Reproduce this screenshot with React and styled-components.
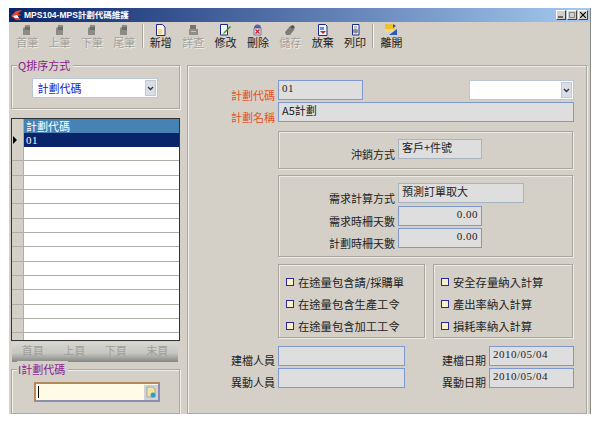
import React from "react";
import styled, { createGlobalStyle } from "styled-components";

const GlobalStyle = createGlobalStyle`
  html, body {
    margin: 0;
    padding: 0;
    background: #fff;
  }
  body {
    font-family: "Noto Sans CJK TC", "Liberation Sans", sans-serif;
    font-size: 11px;
    color: #222;
  }
`;

const Win = styled.div`
  box-sizing: border-box;
  width: 582px;
  height: 406px;
  margin: 8px 0 0 9px;
  background: #d4d0c8;
  border-right: 1px solid #8a8a86;
  overflow: hidden;
`;

const TitleBar = styled.div`
  display: flex;
  align-items: center;
  height: 14px;
  padding: 0 2px 0 2px;
  background: linear-gradient(90deg, #0a246a, #a6caf0);
`;

const AppTitle = styled.span`
  margin-left: 2px;
  flex: 1;
  color: #fff;
  font-size: 8.5px;
  font-weight: 700;
  line-height: 14px;
  white-space: nowrap;
  font-family: "Liberation Sans", "Noto Sans CJK TC", sans-serif;
`;

const WinButton = styled.span`
  display: flex;
  align-items: center;
  justify-content: center;
  box-sizing: border-box;
  width: 10px;
  height: 10px;
  margin-left: 1px;
  background: #d4d0c8;
  border: 1px solid;
  border-color: #fff #404040 #404040 #fff;
`;

const Toolbar = styled.div`
  display: flex;
  height: 29px;
  padding-left: 2px;
`;

const ToolButton = styled.div`
  display: flex;
  flex-direction: column;
  align-items: center;
  width: 32.4px;
  color: ${(p) => (p.$off ? "#a3a19b" : "#222")};
  font-size: 11px;
  line-height: 13px;
  white-space: nowrap;
  text-shadow: ${(p) => (p.$off ? "1px 1px 0 #eeece8" : "none")};
  svg {
    display: block;
    margin-top: 2px;
  }
`;

const ToolSep = styled.div`
  width: 0;
  height: 24px;
  margin: 2px 1px 0 1px;
  border-left: 1px solid #a9a69e;
  border-right: 1px solid #f4f3ef;
`;

const Body = styled.div`
  display: flex;
  gap: 7px;
  padding: 14px 0 0 2px;
`;

const Side = styled.div`
  display: flex;
  flex-direction: column;
  width: 169px;
`;

const Group = styled.div`
  position: relative;
  box-sizing: border-box;
  height: ${(p) => p.$h}px;
  margin-top: ${(p) => p.$mt || 0}px;
  border: 1px solid #aaa89f;
  box-shadow: inset 1px 1px 0 #f1efea, 1px 1px 0 #f1efea;
  display: flex;
  justify-content: center;
  padding-top: ${(p) => p.$top}px;
  padding-left: ${(p) => p.$shift || 0}px;
  padding-right: ${(p) => p.$pullback || 0}px;
`;

const Legend = styled.span`
  position: absolute;
  left: 5px;
  top: -9px;
  padding: 0 3px 0 1px;
  background: #d4d0c8;
  color: #8b1a8b;
  font-size: 11px;
  line-height: 16px;
`;

const SortSelect = styled.div`
  box-sizing: border-box;
  display: flex;
  align-items: center;
  justify-content: space-between;
  width: 126px;
  height: 20px;
  padding: 0 1px 0 5px;
  background: #fff;
  border: 1px solid #b9c7d6;
  color: #1a1acd;
  font-size: 11px;
`;

const Arrow = styled.span`
  display: flex;
  align-items: center;
  justify-content: center;
  width: 11px;
  height: 16px;
  background: #d8dde6;
  border: 1px solid #c3c9d3;
  box-sizing: border-box;
`;

const Table = styled.div`
  box-sizing: border-box;
  height: 223px;
  margin-top: 9px;
  border: 1px solid #333;
  background: #fff;
  overflow: hidden;
`;

const Row = styled.div`
  display: flex;
  box-sizing: border-box;
  height: ${(p) => (p.$tall ? 14 : 14.33)}px;
  border-bottom: ${(p) => (p.$plain ? "none" : "1px solid #aeaea8")};
`;

const RowHead = styled.div`
  position: relative;
  width: 11px;
  background: #d4d0c8;
  border-right: 1px solid #aeaea8;
  flex-shrink: 0;
`;

const Pointer = styled.span`
  position: absolute;
  left: 1px;
  top: 3px;
  width: 0;
  height: 0;
  border-left: 4px solid #000;
  border-top: 4px solid transparent;
  border-bottom: 4px solid transparent;
`;

const Cell = styled.div`
  flex: 1;
  padding-left: 2px;
  line-height: 14px;
  font-size: 11px;
  color: #fff;
  letter-spacing: ${(p) => (p.$digits ? "0.5px" : "normal")};
  font-family: ${(p) =>
    p.$digits ? '"Liberation Serif", serif' : '"Noto Sans CJK TC", sans-serif'};
  background: ${(p) => p.$bg || "#fff"};
`;

const Pager = styled.div`
  display: flex;
  justify-content: space-around;
  align-items: center;
  height: 20px;
  margin: 1px 2px 0 1px;
  padding-bottom: 5px;
  box-sizing: border-box;
  background: linear-gradient(180deg, #d8d7d2 0%, #c6c6c2 55%, #858583 100%);
  color: #a09f9a;
  font-size: 11px;
`;

const CodeInput = styled.div`
  box-sizing: border-box;
  display: flex;
  align-items: center;
  justify-content: space-between;
  width: 126px;
  height: 20px;
  padding: 1px 1px 1px 3px;
  background: #fffbe6;
  border: 1px solid #b08a5a;
  outline: 1px solid #8a8fb0;
  outline-offset: -2px;
`;

const Caret = styled.span`
  width: 1px;
  height: 12px;
  background: #000;
`;

const Main = styled.div`
  box-sizing: border-box;
  width: 400px;
  height: 349px;
  padding: 14px 0 0 90px;
  border: 1px solid #aaa89f;
  box-shadow: inset 1px 1px 0 #f1efea, 1px 1px 0 #f1efea;
`;

const Line = styled.div`
  display: flex;
  align-items: flex-end;
  margin-top: ${(p) => p.$mt || 0}px;
`;

const Label = styled.label`
  width: ${(p) => p.$w || 88}px;
  margin-left: ${(p) => p.$ml || 0}px;
  margin-bottom: ${(p) => p.$drop ?? -3}px;
  padding-right: 3px;
  box-sizing: border-box;
  text-align: right;
  white-space: nowrap;
  font-size: 11px;
  line-height: 15px;
  color: ${(p) => (p.$accent ? "#e2531c" : "#222")};
  flex-shrink: 0;
`;

const Field = styled.div`
  box-sizing: border-box;
  width: ${(p) => p.$w}px;
  height: 20px;
  margin-left: ${(p) => p.$ml || 0}px;
  padding: 0 3px;
  background: #dedede;
  border: 1px solid ${(p) => (p.$soft ? "#a8b4c0" : "#7d99cf")};
  font-size: 11px;
  line-height: 15px;
  letter-spacing: ${(p) => (p.$digits ? "0.5px" : "normal")};
  text-align: ${(p) => (p.$num ? "right" : "left")};
  font-family: ${(p) =>
    p.$digits
      ? '"Liberation Serif", "Noto Sans CJK TC", serif'
      : '"Noto Sans CJK TC", sans-serif'};
  white-space: nowrap;
`;

const EmptySelect = styled.div`
  box-sizing: border-box;
  display: flex;
  justify-content: flex-end;
  align-items: center;
  width: 105px;
  height: 20px;
  margin-left: 106px;
  padding-right: 1px;
  background: #fff;
  border: 1px solid #b9c7d6;
`;

const Box = styled.div`
  box-sizing: border-box;
  width: ${(p) => p.$w || 295}px;
  height: ${(p) => p.$h}px;
  margin-top: ${(p) => p.$mt || 0}px;
  padding-top: ${(p) => p.$top || 0}px;
  border: 1px solid #a8a69e;
  box-shadow: inset 1px 1px 0 #ecebe6, 1px 1px 0 #ecebe6;
`;

const BoxLine = styled(Line)`
  margin-left: -1px;
`;

const Checks = styled.div`
  display: flex;
  gap: 8px;
  margin-top: 7px;
`;

const CheckRow = styled.div`
  display: flex;
  align-items: center;
  gap: 4px;
  height: 22px;
  padding-left: 7px;
  font-size: 11.3px;
  white-space: nowrap;
`;

const CheckMark = styled.span`
  box-sizing: border-box;
  width: 8px;
  height: 8px;
  background: #f7f0c8;
  border: 1px solid #2a2a90;
`;

const Footer = styled.div`
  display: flex;
  flex-direction: column;
  gap: 2px;
  margin-top: 8px;
  margin-left: -90px;
`;

const FooterLine = styled.div`
  display: flex;
  align-items: flex-end;
`;

const navIcon = (
  <svg width="12" height="12" viewBox="0 0 12 12">
    <path d="M2 11V4l2-1V1h5v10z" fill="#8d8b85" />
    <path d="M4 3h5v3H4z" fill="#6e6d68" />
  </svg>
);

const docIcon = (
  <svg width="13" height="12" viewBox="0 0 13 12">
    <path d="M2.500.500h6l2.500 2.500v8.500H2.500z" fill="#fdf4d8" stroke="#1c2a8c" />
    <path d="M4 5h4v5H4z" fill="#f3d48a" />
  </svg>
);

const findIcon = (
  <svg width="13" height="12" viewBox="0 0 13 12">
    <path d="M3 1h6v4H3z" fill="#77756f" />
    <path d="M2 5h9v6H2z" fill="#8f8d87" />
    <path d="M4 7h5v1H4z" fill="#c9c7c0" />
  </svg>
);

const editIcon = (
  <svg width="13" height="12" viewBox="0 0 13 12">
    <path d="M1.500.500h7v10.500h-7z" fill="#f6f6f0" stroke="#1c2a8c" />
    <path d="M5 8l6-6 1 1-6 6-2 1z" fill="#3d8f3a" />
  </svg>
);

const delIcon = (
  <svg width="13" height="12" viewBox="0 0 13 12">
    <circle cx="6.500" cy="4" r="3.500" fill="#5a5fa8" />
    <path d="M3 4h7v7H3z" fill="#e8e6e2" stroke="#4a4a8a" strokeWidth=".7" />
    <path d="M4.500 5.500l4 4m0-4l-4 4" stroke="#d0202c" strokeWidth="1.400" />
  </svg>
);

const saveIcon = (
  <svg width="13" height="12" viewBox="0 0 13 12">
    <path d="M1 8l5-6 3-1 2 2-1 3-4 5H2z" fill="#7f7d78" />
    <circle cx="8.500" cy="3" r="1.500" fill="#4f4e4a" />
  </svg>
);

const dropIcon = (
  <svg width="13" height="12" viewBox="0 0 13 12">
    <path d="M2.500.500h7l1.500 1.500v9.500H2.500z" fill="#f2f2fa" stroke="#1c2a8c" />
    <path d="M4 7l3 3 3-3z" fill="#c8202c" />
    <path d="M4 3h4v3H4z" fill="#6f8fd0" />
  </svg>
);

const printIcon = (
  <svg width="13" height="12" viewBox="0 0 13 12">
    <path d="M3.500.500h6.500v10.500H3.500z" fill="#f8f8f8" stroke="#1c2a8c" />
    <circle cx="6.500" cy="7" r="2.500" fill="#8e8e8e" />
    <path d="M5 2h3v2H5z" fill="#b0b8d8" />
  </svg>
);

const exitIcon = (
  <svg width="14" height="12" viewBox="0 0 14 12">
    <path d="M1 0h7l3 2v3H1z" fill="#f0c030" />
    <path d="M1 5h8v3H1z" fill="#f6dc70" />
    <path d="M5 11l8-6v6z" fill="#2a5cc0" />
    <path d="M9 0l3 2-3 2z" fill="#2a5cc0" />
  </svg>
);

const chevron = (
  <svg width="7" height="5" viewBox="0 0 7 5">
    <path d="M1 1l2.500 2.500L6 1" fill="none" stroke="#333" strokeWidth="1.300" />
  </svg>
);

const tools = [
  { text: "首筆", icon: navIcon, off: true },
  { text: "上筆", icon: navIcon, off: true },
  { text: "下筆", icon: navIcon, off: true },
  { text: "尾筆", icon: navIcon, off: true },
  { sep: true },
  { text: "新增", icon: docIcon },
  { text: "詳查", icon: findIcon, off: true },
  { text: "修改", icon: editIcon },
  { text: "刪除", icon: delIcon },
  { text: "儲存", icon: saveIcon, off: true },
  { text: "放棄", icon: dropIcon },
  { text: "列印", icon: printIcon },
  { sep: true },
  { text: "離開", icon: exitIcon },
];

const leftChecks = ["在途量包含請/採購單", "在途量包含生產工令", "在途量包含加工工令"];
const rightChecks = ["安全存量納入計算", "產出率納入計算", "損耗率納入計算"];

export default function App() {
  return (
    <>
      <GlobalStyle />
      <Win>
        <TitleBar>
          <svg width="11" height="11" viewBox="0 0 11 11">
            <path d="M0 6l5-5 6-1-4 4 4 1-5 1 4 4H5z" fill="#e8452c" />
            <path d="M2 6l4-1 2 3H4z" fill="#fff" />
          </svg>
          <AppTitle>MPS104-MPS計劃代碼維護</AppTitle>
          <WinButton>
            <svg width="6" height="6" viewBox="0 0 6 6"><path d="M0 4.500h5v1H0z" fill="#000" /></svg>
          </WinButton>
          <WinButton>
            <svg width="6" height="6" viewBox="0 0 6 6"><path d="M.5.500h5v5h-5z" fill="none" stroke="#888" /></svg>
          </WinButton>
          <WinButton>
            <svg width="6" height="6" viewBox="0 0 6 6"><path d="M0 0l6 6m0-6L0 6" stroke="#000" strokeWidth="1.200" /></svg>
          </WinButton>
        </TitleBar>
        <Toolbar>
          {tools.map((t, i) =>
            t.sep ? (
              <ToolSep key={i} />
            ) : (
              <ToolButton key={i} $off={t.off}>
                {t.icon}
                {t.text}
              </ToolButton>
            )
          )}
        </Toolbar>
        <Body>
          <Side>
            <Group $h={44} $top={12} $pullback={2}>
              <Legend>Q排序方式</Legend>
              <SortSelect>
                計劃代碼
                <Arrow>{chevron}</Arrow>
              </SortSelect>
            </Group>
            <Table>
              <Row $tall $plain>
                <RowHead />
                <Cell $bg="#4682b4">計劃代碼</Cell>
              </Row>
              <Row $tall $plain>
                <RowHead><Pointer /></RowHead>
                <Cell $bg="#0a246a" $digits>01</Cell>
              </Row>
              {Array.from({ length: 14 }, (_, i) => (
                <Row key={i}>
                  <RowHead />
                  <Cell />
                </Row>
              ))}
            </Table>
            <Pager>
              <span>首頁</span>
              <span>上頁</span>
              <span>下頁</span>
              <span>末頁</span>
            </Pager>
            <Group $h={45} $top={12} $mt={7} $shift={3}>
              <Legend>I計劃代碼</Legend>
              <CodeInput>
                <Caret />
                <svg width="14" height="15" viewBox="0 0 14 15">
                  <path d="M0 0h14v15H0z" fill="#cfd3d8" />
                  <path d="M3 2h6l2 2v8H3z" fill="#f3e3a0" stroke="#8a8a70" strokeWidth=".6" />
                  <circle cx="9" cy="10" r="2.500" fill="#2e9ec8" />
                </svg>
              </CodeInput>
            </Group>
          </Side>
          <Main>
            <Line>
              <Label $accent $w={90} $ml={-90}>計劃代碼</Label>
              <Field $w={85} $digits>01</Field>
              <EmptySelect><Arrow>{chevron}</Arrow></EmptySelect>
            </Line>
            <Line $mt={2}>
              <Label $accent $w={90} $ml={-90}>計劃名稱</Label>
              <Field $w={296}>A5計劃</Field>
            </Line>
            <Box $h={38} $mt={9} $top={7}>
              <BoxLine>
                <Label $w={120}>沖銷方式</Label>
                <Field $w={84} $soft>客戶+件號</Field>
              </BoxLine>
            </Box>
            <Box $h={82} $mt={6} $top={7}>
              <BoxLine>
                <Label $w={120}>需求計算方式</Label>
                <Field $w={126} $soft>預測訂單取大</Field>
              </BoxLine>
              <BoxLine $mt={3}>
                <Label $w={120}>需求時柵天數</Label>
                <Field $w={84} $num $digits>0.00</Field>
              </BoxLine>
              <BoxLine $mt={2}>
                <Label $w={120}>計劃時柵天數</Label>
                <Field $w={84} $num $digits>0.00</Field>
              </BoxLine>
            </Box>
            <Checks>
              <Box $w={147} $h={74} $top={6}>
                {leftChecks.map((c) => (
                  <CheckRow key={c}><CheckMark />{c}</CheckRow>
                ))}
              </Box>
              <Box $w={140} $h={74} $top={6}>
                {rightChecks.map((c) => (
                  <CheckRow key={c}><CheckMark />{c}</CheckRow>
                ))}
              </Box>
            </Checks>
            <Footer>
              <FooterLine>
                <Label $w={90} $drop={-2}>建檔人員</Label>
                <Field $w={127} />
                <Label $w={84} $drop={-2}>建檔日期</Label>
                <Field $w={85} $digits>2010/05/04</Field>
              </FooterLine>
              <FooterLine>
                <Label $w={90} $drop={-2}>異動人員</Label>
                <Field $w={127} />
                <Label $w={84} $drop={-2}>異動日期</Label>
                <Field $w={85} $digits>2010/05/04</Field>
              </FooterLine>
            </Footer>
          </Main>
        </Body>
      </Win>
    </>
  );
}
